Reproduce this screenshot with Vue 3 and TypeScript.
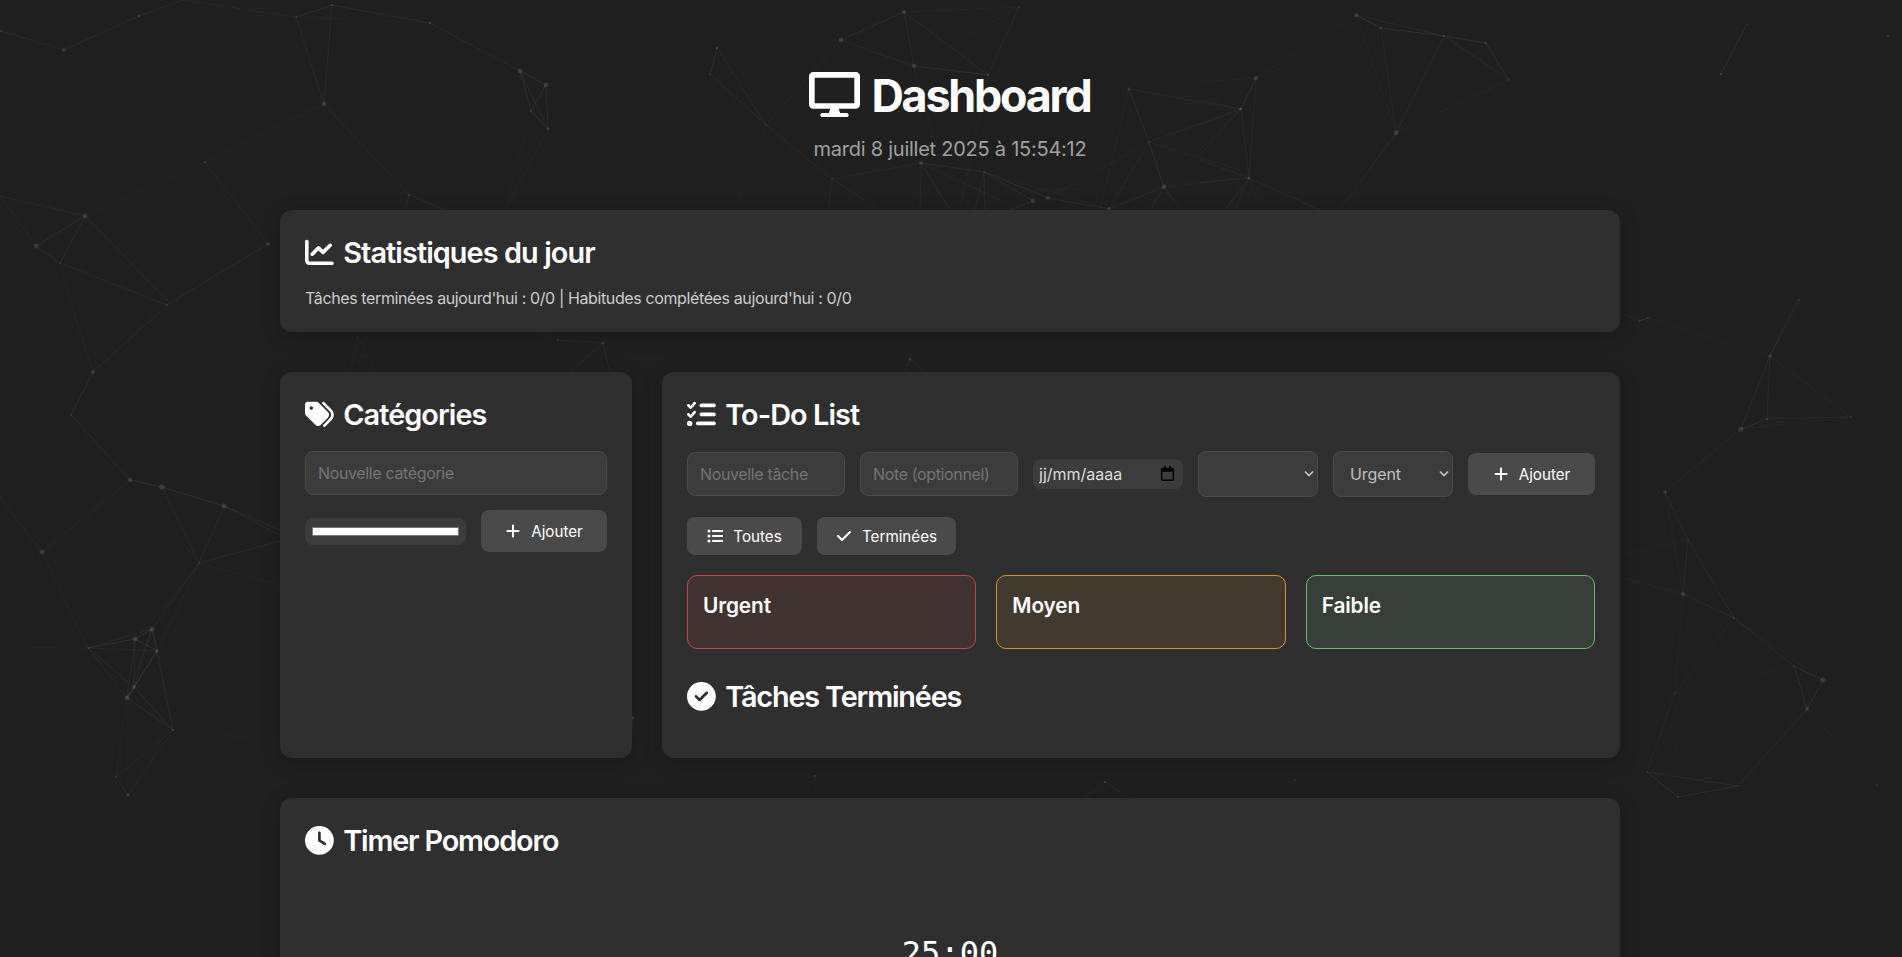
<script setup lang="ts">
type Edge = [number, number, number, number, number?]

const nodes: [number, number, number][] = [
  [1,31,1],[64,50,2],[139,16,1.3],[296,17,.8],[332,5,1.3],[430,23,1.3],[520,71,2.4],[546,85,2.4],[531,111,1.2],[548,129,1.5],[324,104,2.4],[205,162,1],[85,216,2.4],[36,246,2.4],[60,263,.8],[167,300,.8],[167,305,1],[268,244,2],[409,195,1],
  [93,372,2],[71,415,.8],[130,480,2.2],[162,487,2.6],[224,506,2.6],[199,563,.8],[42,552,2.5],[88,648,.8],[152,629,2.5],[135,639,2.5],[157,651,1.8],[134,687,2],[127,698,2.5],[173,730,1],[116,777,.8],[128,795,1.6],
  [1639,321,.8],[1648,318,.8],[1770,356,1.8],[1767,419,1.2],[1851,417,.8],[1741,429,2.6],[1665,492,1.8],[1688,540,.7],[1683,594,2.2],[1734,618,.8],[1794,666,.8],[1823,680,2.6],[1807,709,1.9],[1675,693,.7],[1647,772,.8],[1678,797,.9],[1738,786,.8],[1877,785,.8],
  [1356,15,2.2],[1381,28,1.2],[1444,36,1],[1486,43,1.2],[1509,80,.8],[1256,78,2.2],[1241,109,1.4],[1396,133,2.4],[1249,178,1.6],[1747,24,.7],[1721,74,1.2],[1888,36,1.3],[1799,300,.9],
  [904,12,2.2],[1019,7,.8],[841,40,2.4],[914,66,2.3],[988,75,1.2],[717,48,1.2],[710,74,.8],[766,125,.8],[921,163,2],[984,172,.8],[832,179,.8],[1129,89,1.6],[1149,142,.8],[1240,109,1],[1164,187,2.4],[1048,198,2],[1033,201,2.4],[1109,209,2],
  [358,337,.8],[558,340,1],[603,343,1.4],[910,359,1.6],[633,718,1.4],[815,776,1],[1105,782,1.2],[1295,780,.8]
]

const rawEdges: Edge[] = [
  [1,31,64,50,.06],[64,50,139,16,.07],[139,16,182,0,.07],[182,0,296,17,.05],[296,17,332,5,.08],[332,5,430,23,.07],[296,17,430,23,.03],[430,23,520,71,.07],[520,71,546,85,.1],[520,71,531,111,.09],[520,71,548,129,.06],[546,85,531,111,.09],[546,85,548,129,.08],[531,111,548,129,.1],[296,17,324,104,.06],[332,5,324,104,.07],[324,104,430,23,.02],[324,104,409,195,.05],[324,104,205,162,.04],[205,162,85,216,.03],[205,162,268,244,.05],[85,216,36,246,.09],[85,216,60,263,.08],[36,246,60,263,.08],[85,216,167,300,.07],[60,263,167,305,.06],[0,196,85,216,.06],[0,196,36,246,.05],[268,244,167,305,.07],[409,195,405,210,.06],[409,195,445,210,.07],[531,111,505,210,.03],[548,129,505,210,.04],[60,263,70,300,.03],
  [167,305,93,372,.07],[70,300,93,372,.04],[93,372,71,415,.08],[71,415,130,480,.07],[71,415,0,497,.03],[71,415,162,487,.02],[130,480,162,487,.12],[162,487,224,506,.1],[130,480,42,552,.05],[130,480,0,497,.015],[130,480,199,563,.04],[162,487,199,563,.06],[224,506,199,563,.07],[224,506,280,530,.08],[224,506,280,535,.07],[199,563,280,541,.07],[199,563,280,585,.04],[0,497,42,552,.05],[42,552,88,648,.04],[42,552,0,640,.03],[88,648,0,647,.03],[199,563,152,629,.07],[199,563,145,630,.03],[199,563,157,651,.04],[88,648,152,629,.06],[88,648,135,639,.09],[88,648,157,651,.06],[88,648,134,687,.07],[88,648,127,698,.06],[152,629,135,639,.12],[135,639,157,651,.12],[152,629,157,651,.12],[152,629,134,687,.06],[152,629,127,698,.05],[135,639,134,687,.07],[135,639,127,698,.06],[157,651,134,687,.09],[157,651,127,698,.09],[134,687,127,698,.12],[134,687,173,730,.08],[127,698,173,730,.08],[157,651,173,730,.07],[152,629,173,730,.02],[127,698,116,777,.04],[127,698,128,795,.02],[134,687,116,777,.03],[173,730,116,777,.05],[173,730,128,795,.05],[116,777,128,795,.07],[173,730,280,741,.03],
  [1639,321,1648,318,.12],[1648,318,1770,356,.03],[1620,312,1639,321,.04],[1770,356,1799,300,.07],[1770,356,1797,300,.05],[1770,356,1767,419,.06],[1770,356,1741,429,.07],[1770,356,1851,417,.05],[1767,419,1851,417,.06],[1741,429,1851,417,.04],[1767,419,1741,429,.09],[1741,429,1665,492,.05],[1665,492,1620,527,.02],[1665,492,1688,540,.07],[1665,492,1683,594,.04],[1688,540,1683,594,.07],[1688,540,1620,555,.03],[1688,540,1734,618,.06],[1620,577,1683,594,.04],[1683,594,1734,618,.08],[1683,594,1675,693,.03],[1734,618,1675,693,.04],[1734,618,1794,666,.07],[1734,618,1823,680,.04],[1794,666,1823,680,.1],[1794,666,1807,709,.08],[1823,680,1807,709,.09],[1675,693,1794,666,.03],[1675,693,1807,709,.02],[1675,693,1647,772,.05],[1675,693,1678,797,.025],[1675,693,1738,786,.02],[1647,772,1678,797,.09],[1647,772,1738,786,.06],[1678,797,1738,786,.08],[1807,709,1738,786,.06],[1807,709,1877,785,.04],
  [1356,15,1381,28,.12],[1356,15,1444,36,.06],[1381,28,1444,36,.09],[1444,36,1486,43,.09],[1444,36,1509,80,.07],[1486,43,1509,80,.09],[1486,43,1396,133,.02],[1356,15,1256,78,.04],[1381,28,1256,78,.02],[1356,15,1396,133,.04],[1381,28,1396,133,.05],[1444,36,1396,133,.06],[1509,80,1396,133,.04],[1396,133,1340,210,.06],[1509,80,1515,210,.01],[1256,78,1241,109,.09],[1256,78,1249,178,.05],[1241,109,1249,178,.06],[1241,109,1200,100,.05],[1241,109,1200,125,.05],[1241,109,1200,155,.05],[1249,178,1200,160,.06],[1249,178,1200,183,.05],[1249,178,1225,210,.06],[1249,178,1235,210,.05],[1249,178,1260,210,.04],[1249,178,1320,210,.07],[1256,78,1200,82,.03],[1256,78,1200,110,.03],[1747,24,1721,74,.09],[1747,24,1888,36,.015],
  [904,12,1019,7,.04],[904,12,841,40,.08],[904,12,914,66,.07],[904,12,988,75,.05],[1019,7,914,66,.04],[1019,7,988,75,.06],[841,40,914,66,.07],[841,40,717,48,.025],[841,40,766,125,.04],[914,66,988,75,.09],[914,66,940,160,.04],[717,48,710,74,.09],[717,48,766,125,.07],[710,74,766,125,.07],[766,125,832,179,.05],[766,125,735,210,.03],[832,179,921,163,.05],[832,179,880,210,.05],[832,179,828,210,.05],[921,163,984,172,.08],[921,163,920,210,.05],[921,163,950,210,.07],[921,163,1000,200,.05],[984,172,1109,209,.04],[984,172,975,210,.06],[984,172,985,210,.06],[984,172,1048,198,.09],[984,172,1033,201,.09],[1048,198,1109,209,.07],[1033,201,1010,210,.08],[1048,198,1149,142,.04],[1129,89,1149,142,.08],[1129,89,1240,109,.05],[1149,142,1240,109,.05],[1149,142,1164,187,.09],[1149,142,1240,170,.04],[1164,187,1240,178,.05],[1164,187,1109,209,.07],[1149,142,1110,208,.05],[1129,89,1100,210,.04],[1164,187,1180,210,.07],[1164,187,1150,210,.06],[1240,109,1164,187,.04],[1033,190,1164,187,.02],[988,75,960,210,.04],
  [358,337,350,372,.04],[358,337,375,372,.04],[558,340,603,343,.06],[603,343,610,372,.06],[603,343,570,372,.05],[558,340,540,332,.04],[910,359,905,372,.07],[910,359,925,372,.06],[815,776,815,798,.04],[1105,782,1085,798,.05],[1105,782,1130,798,.05],[1295,780,1285,798,.03],[633,718,632,730,.06]
]

const edges = rawEdges.map((e): Edge => [e[0], e[1], e[2], e[3], (e[4] ?? 0.05) * 0.7])

const columns = [
  { name: 'Urgent', cls: 'urgent' },
  { name: 'Moyen', cls: 'moyen' },
  { name: 'Faible', cls: 'faible' }
]
</script>

<template>
  <div class="page">
    <svg class="network" viewBox="0 0 1902 957" width="1902" height="957" aria-hidden="true">
      <line v-for="(e, i) in edges" :key="'e' + i" :x1="e[0]" :y1="e[1]" :x2="e[2]" :y2="e[3]" stroke="#fff" stroke-width="1" :stroke-opacity="e[4]" />
      <circle v-for="(n, i) in nodes" :key="'n' + i" :cx="n[0]" :cy="n[1]" :r="n[2]" fill="#fff" fill-opacity="0.11" />
    </svg>

    <main class="shell">
      <header class="top">
        <h1>
          <svg class="ic-desktop" viewBox="0 0 576 512"><path d="M528 0H48C21.5 0 0 21.5 0 48v320c0 26.5 21.5 48 48 48h192l-16 48h-72c-13.3 0-24 10.7-24 24s10.7 24 24 24h272c13.3 0 24-10.7 24-24s-10.7-24-24-24h-72l-16-48h192c26.5 0 48-21.5 48-48V48c0-26.5-21.5-48-48-48zm-16 352H64V64h448v288z" /></svg>
          <span>Dashboard</span>
        </h1>
        <p class="date">mardi 8 juillet 2025 à 15:54:12</p>
      </header>

      <section class="card stats">
        <h2>
          <svg class="ic" viewBox="0 0 512 512"><path d="M64 64c0-17.7-14.3-32-32-32S0 46.3 0 64V400c0 44.2 35.8 80 80 80H480c17.7 0 32-14.3 32-32s-14.3-32-32-32H80c-8.8 0-16-7.2-16-16V64zm406.6 86.6c12.5-12.5 12.5-32.8 0-45.3s-32.8-12.5-45.3 0L320 210.7l-57.4-57.4c-12.5-12.5-32.8-12.5-45.3 0l-112 112c-12.5 12.5-12.5 32.8 0 45.3s32.8 12.5 45.3 0L240 221.3l57.4 57.4c12.5 12.5 32.8 12.5 45.3 0l128-128z" /></svg>
          Statistiques du jour
        </h2>
        <p class="stats-line">Tâches terminées aujourd'hui : 0/0 | Habitudes complétées aujourd'hui : 0/0</p>
      </section>

      <div class="main-row">
        <section class="card">
          <h2>
            <svg class="ic" viewBox="0 0 512 512"><path d="M345 39.1L472.8 168.4c52.4 53 52.4 138.2 0 191.2L360.8 472.9c-9.3 9.4-24.5 9.5-33.9 .2s-9.5-24.5-.2-33.9L438.6 325.9c33.9-34.3 33.9-89.4 0-123.7L310.9 72.9c-9.3-9.4-9.2-24.6 .2-33.9s24.6-9.2 33.9 .2zM0 229.5V80C0 53.5 21.5 32 48 32H197.5c17 0 33.3 6.7 45.3 18.7l168 168c25 25 25 65.5 0 90.5L277.3 442.7c-25 25-65.5 25-90.5 0l-168-168C6.7 262.7 0 246.5 0 229.5zM144 144a32 32 0 1 0 -64 0 32 32 0 1 0 64 0z" /></svg>
            Catégories
          </h2>
          <input class="field full" type="text" placeholder="Nouvelle catégorie" />
          <div class="color-row">
            <input class="color" type="color" value="#ffffff" />
            <button class="btn add" type="button">
              <svg class="btn-ic" viewBox="0 0 448 512"><path d="M256 80c0-17.7-14.3-32-32-32s-32 14.3-32 32V224H48c-17.7 0-32 14.3-32 32s14.3 32 32 32H192V432c0 17.7 14.3 32 32 32s32-14.3 32-32V288H400c17.7 0 32-14.3 32-32s-14.3-32-32-32H256V80z" /></svg>
              Ajouter
            </button>
          </div>
        </section>

        <section class="card">
          <h2>
            <svg class="ic" viewBox="0 0 512 512"><path d="M152.1 38.2c9.9 8.9 10.7 24 1.8 33.9l-72 80c-4.4 4.9-10.6 7.8-17.2 7.9s-12.9-2.4-17.6-7L7 113C-2.3 103.6-2.3 88.4 7 79s24.6-9.4 33.9 0l22.1 22.1 55.1-61.2c8.9-9.9 24-10.7 33.9-1.8zm0 160c9.9 8.9 10.7 24 1.8 33.9l-72 80c-4.4 4.9-10.6 7.8-17.2 7.9s-12.9-2.4-17.6-7L7 273c-9.4-9.4-9.4-24.6 0-33.9s24.6-9.4 33.9 0l22.1 22.1 55.1-61.2c8.9-9.9 24-10.7 33.9-1.8zM224 96c0-17.7 14.3-32 32-32H480c17.7 0 32 14.3 32 32s-14.3 32-32 32H256c-17.7 0-32-14.3-32-32zm0 160c0-17.7 14.3-32 32-32H480c17.7 0 32 14.3 32 32s-14.3 32-32 32H256c-17.7 0-32-14.3-32-32zM160 416c0-17.7 14.3-32 32-32H480c17.7 0 32 14.3 32 32s-14.3 32-32 32H192c-17.7 0-32-14.3-32-32zM48 368a48 48 0 1 1 0 96 48 48 0 1 1 0-96z" /></svg>
            To-Do List
          </h2>
          <div class="task-form">
            <input class="field task" type="text" placeholder="Nouvelle tâche" />
            <input class="field task" type="text" placeholder="Note (optionnel)" />
            <div class="date-wrap">
              <input class="date-field" type="text" value="jj/mm/aaaa" />
              <svg class="cal" viewBox="0 0 14 16"><path d="M3 0h2v2h4V0h2v2h1.500A1.500 1.500 0 0 1 14 3.500v11a1.500 1.500 0 0 1-1.500 1.500h-11A1.500 1.500 0 0 1 0 14.500v-11A1.500 1.500 0 0 1 1.500 2H3V0zM1.500 6v8.500h11V6h-11z" /></svg>
            </div>
            <div class="select-wrap">
              <select class="select"><option></option></select>
              <svg class="chev" viewBox="0 0 10 6"><path d="M1 1l4 4 4-4" /></svg>
            </div>
            <div class="select-wrap">
              <select class="select"><option>Urgent</option><option>Moyen</option><option>Faible</option></select>
              <svg class="chev" viewBox="0 0 10 6"><path d="M1 1l4 4 4-4" /></svg>
            </div>
            <button class="btn add wide" type="button">
              <svg class="btn-ic" viewBox="0 0 448 512"><path d="M256 80c0-17.7-14.3-32-32-32s-32 14.3-32 32V224H48c-17.7 0-32 14.3-32 32s14.3 32 32 32H192V432c0 17.7 14.3 32 32 32s32-14.3 32-32V288H400c17.7 0 32-14.3 32-32s-14.3-32-32-32H256V80z" /></svg>
              Ajouter
            </button>
          </div>
          <div class="filters">
            <button class="btn filter" type="button">
              <svg class="btn-ic" viewBox="0 0 512 512"><path d="M64 144a48 48 0 1 0 0-96 48 48 0 1 0 0 96zM192 64c-17.700 0-32 14.300-32 32s14.300 32 32 32H480c17.700 0 32-14.300 32-32s-14.300-32-32-32H192zm0 160c-17.700 0-32 14.300-32 32s14.300 32 32 32H480c17.700 0 32-14.300 32-32s-14.300-32-32-32H192zm0 160c-17.700 0-32 14.300-32 32s14.300 32 32 32H480c17.700 0 32-14.300 32-32s-14.300-32-32-32H192zM64 464a48 48 0 1 0 0-96 48 48 0 1 0 0 96zm48-208a48 48 0 1 0 -96 0 48 48 0 1 0 96 0z" /></svg>
              Toutes
            </button>
            <button class="btn filter" type="button">
              <svg class="btn-ic" viewBox="0 0 448 512"><path d="M438.600 105.400c12.500 12.500 12.500 32.800 0 45.300l-256 256c-12.500 12.500-32.800 12.500-45.300 0l-128-128c-12.500-12.500-12.500-32.800 0-45.300s32.800-12.500 45.300 0L160 338.700 393.400 105.400c12.500-12.500 32.800-12.500 45.300 0z" /></svg>
              Terminées
            </button>
          </div>
          <div class="columns">
            <div v-for="c in columns" :key="c.name" class="column" :class="c.cls">
              <h3>{{ c.name }}</h3>
            </div>
          </div>
          <h2 class="done-title tight">
            <svg class="ic" viewBox="0 0 512 512"><path d="M256 512A256 256 0 1 0 256 0a256 256 0 1 0 0 512zM369 209L241 337c-9.400 9.400-24.600 9.400-33.900 0l-64-64c-9.400-9.400-9.400-24.600 0-33.900s24.600-9.400 33.900 0l47 47L335 175c9.400-9.400 24.600-9.400 33.900 0s9.400 24.600 0 33.900z" /></svg>
            Tâches Terminées
          </h2>
        </section>
      </div>

      <section class="card timer">
        <h2 class="tight">
          <svg class="ic" viewBox="0 0 512 512"><path d="M256 0a256 256 0 1 1 0 512A256 256 0 1 1 256 0zM232 120V256c0 8 4 15.500 10.700 20l96 64c11 7.400 25.900 4.400 33.300-6.700s4.400-25.900-6.700-33.300L280 243.200V120c0-13.300-10.700-24-24-24s-24 10.700-24 24z" /></svg>
          Timer Pomodoro
        </h2>
        <div class="time">25:00</div>
      </section>
    </main>
  </div>
</template>

<style>
html, body { margin: 0; background: #202020; }
</style>

<style scoped>
.page {
  position: relative;
  height: 957px;
  overflow: hidden;
  background: #202020;
  color: #fff;
  font-family: Inter, "Liberation Sans", sans-serif;
  font-size: 16px;
}
.network { position: absolute; left: 0; top: 0; }
.shell {
  position: relative;
  width: 1340px;
  margin-left: 280px;
  padding-top: 69px;
}
.top { text-align: center; margin-bottom: 49px; }
h1 {
  margin: 0;
  font-size: 44.8px;
  font-weight: 700;
  line-height: 54px;
  letter-spacing: -2.2px;
  display: flex;
  justify-content: center;
  align-items: center;
  gap: 11px;
}
.ic-desktop { width: 51px; height: 45.300px; fill: #fff; margin-top: -3px; }
.date { margin: 15px 0 0; font-size: 20px; line-height: 23px; letter-spacing: -0.25px; color: #a0a0a0; }
.card {
  background: #2f2f2f;
  border-radius: 12px;
  padding: 25px;
  box-shadow: 0 4px 20px rgba(0, 0, 0, 0.2);
}
.stats { margin-bottom: 40px; padding-bottom: 24px; }
h2 {
  margin: 0 0 19px;
  font-size: 28.800px;
  font-weight: 600;
  line-height: 35px;
  letter-spacing: -0.9px;
  display: flex;
  align-items: center;
  gap: 9.400px;
}
h2.tight { letter-spacing: -1.15px; }
.ic { width: 28.800px; height: 28.800px; fill: #fff; flex: none; }
.stats-line { margin: 0; line-height: 19px; letter-spacing: -0.38px; color: #ccc; }
.main-row {
  display: grid;
  grid-template-columns: 352px 958px;
  gap: 30px;
  margin-bottom: 40px;
}
.field {
  box-sizing: border-box;
  height: 44px;
  padding: 0 12px;
  background: #3c3c3c;
  border: 1px solid #4a4a4a;
  border-radius: 8px;
  color: #ccc;
  font: inherit;
  letter-spacing: -0.36px;
  outline: none;
}
.field::placeholder { color: #757575; opacity: 1; }
.full { display: block; width: 302px; }
.color-row {
  display: flex;
  align-items: center;
  gap: 15px;
  margin-top: 15px;
}
.color {
  box-sizing: border-box;
  width: 161px;
  height: 27px;
  padding: 0;
  background: #3c3c3c;
  border: 0;
  border-radius: 8px;
  appearance: none;
}
.color::-webkit-color-swatch-wrapper { padding: 9px 7px; }
.color::-webkit-color-swatch { border: 1px solid #767676; border-radius: 0; }
.btn {
  display: inline-flex;
  align-items: center;
  justify-content: center;
  gap: 10px;
  box-sizing: border-box;
  background: #4a4a4a;
  border: 0;
  border-radius: 8px;
  color: #fff;
  font: inherit;
  font-size: 15.200px;
  font-weight: 400;
}
.btn-ic { width: 16px; height: 16px; fill: #fff; flex: none; }
.add { width: 126px; height: 42px; }
.wide { width: 127px; }
.task-form {
  display: flex;
  align-items: center;
  gap: 15px;
}
.task { width: 158px; }
.date-wrap { position: relative; width: 150px; }
.date-field {
  display: block;
  box-sizing: border-box;
  width: 150px;
  height: 30px;
  padding: 0 6px;
  background: #3c3c3c;
  border: 0;
  border-radius: 8px;
  color: #ddd;
  font: inherit;
  outline: none;
}
.cal { position: absolute; right: 9px; top: 7px; width: 13px; height: 15px; fill: #000; }
.select-wrap { position: relative; width: 120px; }
.select {
  display: block;
  box-sizing: border-box;
  width: 120px;
  height: 46px;
  padding: 0 0 0 16px;
  background: #3c3c3c;
  border: 1px solid #4a4a4a;
  border-radius: 8px;
  color: #c0c0c0;
  font: inherit;
  letter-spacing: -0.1px;
  appearance: none;
  outline: none;
}
.chev {
  position: absolute;
  right: 4px;
  top: 19px;
  width: 10px;
  height: 7px;
  fill: none;
  stroke: #c4c4c4;
  stroke-width: 1.700;
}
.filters {
  display: flex;
  gap: 15px;
  margin-top: 20px;
}
.filter { height: 38px; padding: 0 20px; }
.filter:first-child { width: 115px; }
.filter:last-child { width: 139px; }
.columns {
  display: grid;
  grid-template-columns: repeat(3, 1fr);
  gap: 20px;
  margin-top: 20px;
}
.column {
  box-sizing: border-box;
  height: 74px;
  padding: 17px 15px;
  border: 1px solid;
  border-radius: 10px;
}
h3 { margin: 0; font-size: 20.800px; font-weight: 600; line-height: 25px; letter-spacing: -0.1px; }
.urgent { background: #413332; border-color: #c6453c; }
.moyen { background: #423a2f; border-color: #d6922a; }
.faible { background: #383f38; border-color: #66bb6a; }
.done-title { margin-top: 30px; }
.timer { height: 260px; box-sizing: border-box; }
.time {
  margin-top: 76px;
  text-align: center;
  font-family: "DejaVu Sans Mono", monospace;
  font-size: 32px;
  line-height: 38px;
  color: #fff;
}
</style>
